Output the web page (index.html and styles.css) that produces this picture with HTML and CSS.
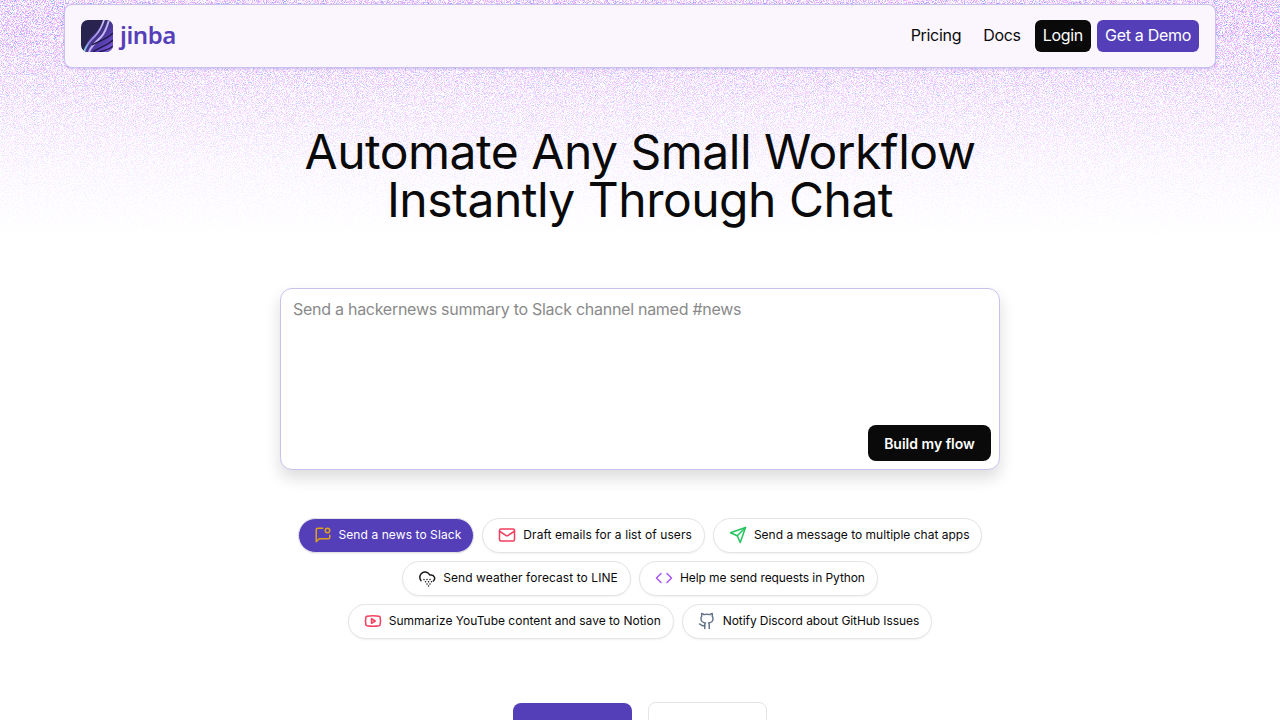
FILE: index.html
```html
<!DOCTYPE html>
<html lang="en">
<head>
  <meta charset="UTF-8">
  <meta content="width=device-width, initial-scale=1.0" name="viewport">
  <title>Jinba</title>
  <link rel="stylesheet" href="styles.css">
</head>
<body>

<!-- grainy backdrop behind the header -->
<svg class="grain" width="1280" height="250" aria-hidden="true">
  <filter id="grain-filter" x="0" y="0" width="100%" height="100%" color-interpolation-filters="sRGB">
    <feTurbulence type="fractalNoise" baseFrequency="1.1" numOctaves="2" seed="7"/>
    <feColorMatrix type="matrix" values="1.5 0 0 0 0.12  0 0.2 0 0 0.58  0 0 0 0 1  0 0 0 5 -2.1"/>
  </filter>
  <rect width="1280" height="250" filter="url(#grain-filter)"/>
</svg>

<div class="page">

  <!-- nav -->
  <header class="nav">
    <a class="brand" href="#">
      <svg class="brand-mark" viewBox="0 0 32 32" width="32" height="32">
        <defs>
          <linearGradient id="mark-fill" x1="0" y1="0" x2="1" y2="1">
            <stop offset="0.3" stop-color="#2e2a5e"/>
            <stop offset="0.7" stop-color="#5a3fb4"/>
            <stop offset="1" stop-color="#8a62ea"/>
          </linearGradient>
          <linearGradient id="mark-line" x1="0" y1="1" x2="1" y2="0">
            <stop offset="0" stop-color="#7fe3ea"/>
            <stop offset="0.3" stop-color="#8f7be0"/>
            <stop offset="1" stop-color="#cfc4f4"/>
          </linearGradient>
          <clipPath id="mark-clip"><rect width="32" height="32" rx="7"/></clipPath>
        </defs>
        <g clip-path="url(#mark-clip)">
          <rect width="32" height="32" fill="#29244f"/>
          <path d="M23 0C20 8 14 13 9 18C6 22 4 27 3 32L32 32L32 0Z" fill="url(#mark-fill)"/>
          <path d="M3 32C5 25 9 21 14 16C18 12 21 6 23 0" fill="none" stroke="url(#mark-line)" stroke-width="1.8"/>
          <path d="M8 32C10 26 15 22 20 17C24 13 26 7 28 0" fill="none" stroke="#c2b5f2" stroke-width="2"/>
          <path d="M11 25C17 21 25 20 32 13" fill="none" stroke="#1f1947" stroke-width="1.4"/>
          <path d="M12 32C18 27 26 26 32 20" fill="none" stroke="#1f1947" stroke-width="1.5"/>
          <path d="M18 32C23 30 28 30 32 26" fill="none" stroke="#1f1947" stroke-width="1.3"/>
        </g>
      </svg>
      <span class="brand-name">jinba</span>
    </a>
    <nav class="nav-links">
      <a class="nav-link" href="#">Pricing</a>
      <a class="nav-link" href="#">Docs</a>
      <a class="nav-link login" href="#">Login</a>
      <a class="nav-link demo" href="#">Get a Demo</a>
    </nav>
  </header>

  <h1 class="title">Automate Any Small Workflow<br>Instantly Through Chat</h1>

  <!-- prompt box -->
  <form class="prompt">
    <textarea class="prompt-input" placeholder="Send a hackernews summary to Slack channel named #news"></textarea>
    <div class="prompt-actions">
      <button class="build-button" type="button">Build my flow</button>
    </div>
  </form>

  <!-- example chips -->
  <div class="chips">
    <button class="chip active wide" type="button">
      <svg class="icon amber" viewBox="0 0 24 24"><path d="M11.7 3H5a2 2 0 0 0-2 2v16l4-4h12a2 2 0 0 0 2-2v-2.7"/><circle cx="18" cy="6" r="3"/></svg>
      Send a news to Slack
    </button>
    <button class="chip wide" type="button">
      <svg class="icon red" viewBox="0 0 24 24"><rect width="20" height="16" x="2" y="4" rx="2"/><path d="m22 7-8.97 5.7a1.94 1.94 0 0 1-2.06 0L2 7"/></svg>
      Draft emails for a list of users
    </button>
    <button class="chip" type="button">
      <svg class="icon green" viewBox="0 0 24 24"><path d="m22 2-7 20-4-9-9-4Z"/><path d="M22 2 11 13"/></svg>
      Send a message to multiple chat apps
    </button>
    <button class="chip wide" type="button">
      <svg class="icon dark" viewBox="0 0 24 24"><path d="M4 15.5A7 7 0 1 1 15.7 8h1.8a4.5 4.5 0 0 1 3 8"/><path d="M8 14h.01M12 14h.01M16 14h.01M10 17h.01M14 17h.01M18 17h.01M12 20h.01M16 20h.01M14 22.5h.01"/></svg>
      Send weather forecast to LINE
    </button>
    <button class="chip tight" type="button">
      <svg class="icon purple" viewBox="0 0 24 24"><polyline points="16 18 22 12 16 6"/><polyline points="8 6 2 12 8 18"/></svg>
      Help me send requests in Python
    </button>
    <button class="chip" type="button">
      <svg class="icon red" viewBox="0 0 24 24"><path d="M2.5 17a24.12 24.12 0 0 1 0-10 2 2 0 0 1 1.4-1.4 49.56 49.56 0 0 1 16.2 0A2 2 0 0 1 21.5 7a24.12 24.12 0 0 1 0 10 2 2 0 0 1-1.4 1.4 49.55 49.55 0 0 1-16.2 0A2 2 0 0 1 2.5 17"/><path d="m10 15 5-3-5-3z"/></svg>
      Summarize YouTube content and save to Notion
    </button>
    <button class="chip tight" type="button">
      <svg class="icon slate" viewBox="0 0 24 24"><path d="M15 22v-4a4.8 4.8 0 0 0-1-3.5c3 0 6-2 6-5.5.08-1.25-.27-2.48-1-3.5.28-1.15.28-2.35 0-3.5 0 0-1 0-3 1.5-2.64-.5-5.36-.5-8 0C6 2 5 2 5 2c-.3 1.15-.3 2.35 0 3.5A5.403 5.403 0 0 0 4 9c0 3.5 3 5.5 6 5.5-.39.49-.68 1.05-.85 1.65-.17.6-.22 1.23-.15 1.85v4"/><path d="M9 18c-4.51 2-5-2-7-2"/></svg>
      Notify Discord about GitHub Issues
    </button>
  </div>

  <!-- buttons cut off by the fold -->
  <div class="cta">
    <a class="cta-button primary" href="#"></a>
    <a class="cta-button secondary" href="#"></a>
  </div>

</div>
</body>
</html>
```

FILE: styles.css
```css
:root{
  --purple: #553fb9;
  --black: #0a0a0a;
  --line: #c9c2ee;
  --chip-line: #e4e4e7;
}

*{
  box-sizing: border-box;
}

html, body{
  margin: 0;
  height: 720px;
  overflow: hidden;
}

body{
  position: relative;
  background-color: #fff;
  font-family: "Inter", "Liberation Sans", sans-serif;
  color: var(--black);
}

/* noise fades out towards the title */
.grain{
  position: absolute;
  top: 0;
  left: 0;
  -webkit-mask-image: linear-gradient(to bottom, #000 0, #000 30px, rgba(0, 0, 0, 0.55) 100px, rgba(0, 0, 0, 0.2) 170px, transparent 240px);
  mask-image: linear-gradient(to bottom, #000 0, #000 30px, rgba(0, 0, 0, 0.55) 100px, rgba(0, 0, 0, 0.2) 170px, transparent 240px);
}

.page{
  position: relative;
  display: flex;
  flex-direction: column;
  align-items: center;
  padding-top: 4px;
}

.nav{
  display: flex;
  justify-content: space-between;
  align-items: center;
  width: 1152px;
  height: 64px;
  padding: 0 16px;
  background-color: #fbf6fe;
  border: 1px solid var(--line);
  border-radius: 8px;
  box-shadow: 0 1px 3px rgba(85, 63, 185, 0.25);
}

.brand{
  display: flex;
  align-items: center;
  gap: 7px;
  text-decoration: none;
}

.brand-name{
  padding-bottom: 2px;
  font-size: 24px;
  font-weight: 600;
  font-family: "Noto Sans", sans-serif;
  color: var(--purple);
  line-height: 32px;
  letter-spacing: -0.4px;
}

.nav-links{
  display: flex;
  align-items: center;
  gap: 6px;
}

.nav-link{
  display: block;
  padding: 0 8px;
  height: 32px;
  line-height: 31px;
  font-size: 16px;
  letter-spacing: -0.3px;
  border-radius: 6px;
  color: var(--black);
  text-decoration: none;
}

.nav-link.login{
  background-color: var(--black);
  color: #fff;
}

.nav-link.demo{
  background-color: var(--purple);
  color: #fff;
}

.title{
  margin: 60px 0 64px;
  font-size: 48px;
  line-height: 48px;
  font-weight: 400;
  letter-spacing: -0.5px;
  text-align: center;
}

.prompt{
  display: flex;
  flex-direction: column;
  width: 720px;
  height: 182px;
  background-color: #fff;
  border: 1px solid var(--line);
  border-radius: 12px;
  box-shadow: 0 8px 16px rgba(0, 0, 0, 0.14);
}

.prompt-input{
  flex: 1;
  padding: 10px 12px;
  border: none;
  border-radius: 12px;
  outline: none;
  resize: none;
  background: transparent;
  font-family: inherit;
  font-size: 16px;
  line-height: 20px;
  letter-spacing: -0.27px;
}

.prompt-input::placeholder{
  color: #8a8a8a;
}

.prompt-actions{
  display: flex;
  justify-content: flex-end;
  padding: 0 8px 8px;
}

.build-button{
  width: 123px;
  height: 36px;
  border: none;
  border-radius: 8px;
  background-color: var(--black);
  color: #fff;
  font-family: inherit;
  font-size: 14px;
  font-weight: 600;
}

.chips{
  display: flex;
  flex-wrap: wrap;
  justify-content: center;
  gap: 8px;
  width: 720px;
  margin-top: 48px;
}

.chip{
  display: flex;
  align-items: center;
  gap: 7px;
  height: 35px;
  padding: 0 12px 2px 15px;
  background-color: #fff;
  border: 1px solid var(--chip-line);
  border-radius: 18px;
  box-shadow: 0 1px 2px rgba(0, 0, 0, 0.06);
  font-family: inherit;
  font-size: 12px;
  line-height: 14px;
  color: var(--black);
  white-space: nowrap;
}

/* small fixes so the rows come out as wide as they should */
.chip.wide{
  letter-spacing: 0.08px;
}

.chip.tight{
  letter-spacing: -0.08px;
}

.chip.active{
  background-color: var(--purple);
  color: #fff;
}

.icon{
  width: 18px;
  height: 18px;
  fill: none;
  stroke: currentColor;
  stroke-width: 2;
  stroke-linecap: round;
  stroke-linejoin: round;
  flex-shrink: 0;
}

.amber{ color: #e0a020; }
.red{ color: #f43f5e; }
.green{ color: #22c55e; }
.dark{ color: #18181b; }
.purple{ color: #a855f7; }
.slate{ color: #64748b; }

.cta{
  display: flex;
  gap: 16px;
  margin-top: 63px;
}

.cta-button{
  display: block;
  width: 119px;
  height: 48px;
  border-radius: 8px;
}

.cta-button.primary{
  margin-top: 1px;
  background-color: var(--purple);
}

.cta-button.secondary{
  background-color: #fff;
  border: 1px solid var(--chip-line);
}
```
